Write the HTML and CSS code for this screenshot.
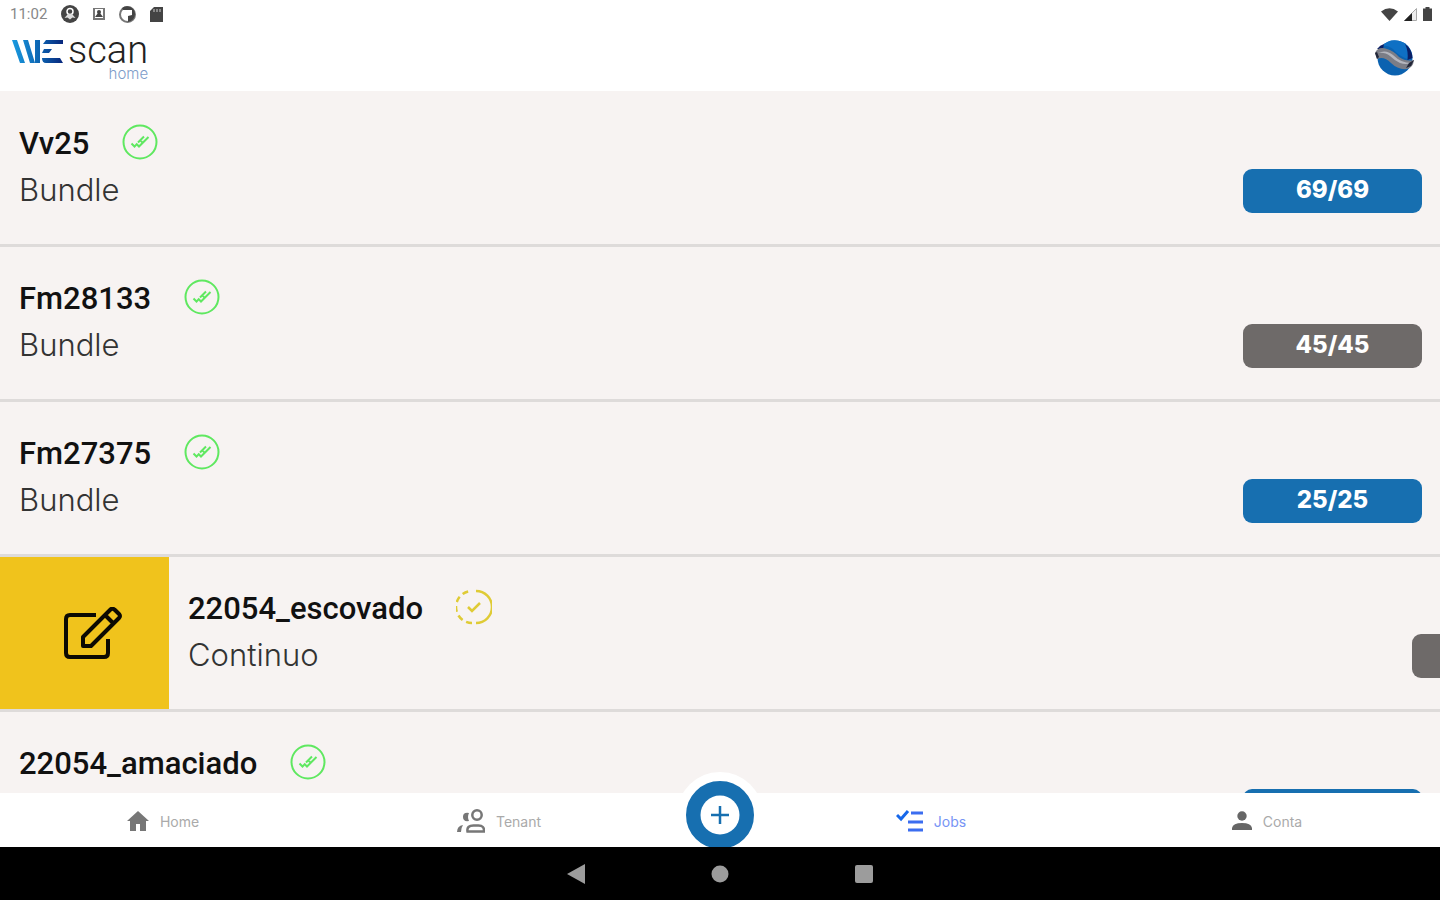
FILE: index.html
```html
<!DOCTYPE html>
<html lang="pt">
  <head>
    <meta charset="utf-8">
    <meta name="viewport" content="width=device-width, initial-scale=1">
    <title>WEscan home</title>
    <link rel="stylesheet" href="styles.css">
  </head>
  <body>
    <!-- shared status icons -->
    <svg class="defs" aria-hidden="true">
      <symbol id="done" viewBox="0 0 36 36">
        <circle cx="18" cy="18" r="16.5" fill="none" stroke="currentColor" stroke-width="2"/>
        <path d="M9.500 19.500l3 3 1.500-1.500M14 19.500l3 3 9.500-9.500M16 18.500l6-6M20 18l-2-2" fill="none" stroke="currentColor" stroke-width="2"/>
      </symbol>
      <symbol id="partial" viewBox="0 0 36 36">
        <path d="M20 2a16 16 0 0 1 0 32" fill="none" stroke="currentColor" stroke-width="2.500"/>
        <path d="M16 34A16 16 0 0 1 16 2" fill="none" stroke="currentColor" stroke-width="2.500" stroke-dasharray="6 4"/>
        <path d="M12 18l4 4 8-8" fill="none" stroke="currentColor" stroke-width="2.500"/>
      </symbol>
    </svg>

    <div class="status">
      <span class="clock">11:02</span>
      <svg width="18" height="18" viewBox="0 0 18 18"><circle cx="9" cy="9" r="9" fill="#444"/><circle cx="9" cy="6.500" r="3" fill="none" stroke="#fff" stroke-width="1.500"/><path d="M3.500 13l3.500-4h4l3.500 4-3-.5-2.500 2-2.500-2z" fill="#ddd"/></svg>
      <svg width="12" height="12" viewBox="0 0 12 12"><path d="M0 0h12v12H0z" fill="#777"/><path d="M2 1h8v9H2z" fill="#fff"/><circle cx="6" cy="4" r="2" fill="#444"/><path d="M2 9l3-4h2l3 4z" fill="#444"/></svg>
      <svg width="17" height="17" viewBox="0 0 17 17"><circle cx="8.500" cy="8.500" r="7.500" fill="#fff" stroke="#777" stroke-width="2"/><path d="M4 4h9v5l-4 1v6a8 8 0 0 0 7-8 8 8 0 0 0-13-6z" fill="#444"/></svg>
      <svg width="13" height="15" viewBox="0 0 13 15"><path d="M4 0h9v15H0V4z" fill="#444"/><path d="M4 2v3M7 2v3M10 2v3" stroke="#ccc"/></svg>
      <span class="signals">
        <svg width="17" height="13" viewBox="0 0 17 13"><path d="M0 3.500Q8.500-3 17 3.500L8.500 13z" fill="#444"/></svg>
        <svg width="13" height="13" viewBox="0 0 13 13"><path d="M12.500 .5v12H.5z" fill="#eee" stroke="#aaa"/><path d="M8 5v8H0z" fill="#222"/></svg>
        <svg width="9" height="14" viewBox="0 0 9 14"><path d="M2.500 0h4v1.500H9V14H0V1.500h2.500z" fill="#444"/></svg>
      </span>
    </div>

    <header class="header">
      <div class="logo">
        <svg class="mark" width="52" height="24" viewBox="0 0 52 24" aria-label="WE">
          <defs>
            <linearGradient id="mk" x1="0" x2="52" y1="0" y2="0" gradientUnits="userSpaceOnUse"><stop stop-color="#1a9be0"/><stop offset=".55" stop-color="#0c62b0"/><stop offset="1" stop-color="#08247a"/></linearGradient>
          </defs>
          <path d="M0 0h5l8 23H8zM11 0h5l7 23h-5zM23 0h5v23h-5zM34 0h17v4H31zM32 9h8l-3 4h-7zM30 18h18l3 5H34q-4 0-4-5z" fill="url(#mk)"/>
        </svg>
        <span class="word">scan</span>
        <span class="sub">home</span>
      </div>
      <svg class="globe" width="42" height="36" viewBox="0 0 42 36">
        <circle cx="21" cy="18" r="17.500" fill="#0b62b0"/>
        <path d="M8 6A17.500 17.500 0 0 1 38 14l-2 6Q24 16 19 9 14 5 8 6z" fill="#0f70c4"/>
        <path d="M31 4q7 5 7.500 14l-5 2q1-9-2.500-16zM3 9q3-4 7-5l-1 5z" fill="#0a1f66"/>
        <path d="M1 13Q4 6 13 9q7 2 12 8 7 5 15 3-1 8-7 9-9 1-16-6Q10 16 3 19z" fill="#7b7d86"/>
        <path d="M4 13q8-4 15 2 8 8 18 8-5 2-11 0-6-3-10-7-5-4-12-3z" fill="#b4b6be"/>
        <path d="M1 13l2 6 2-2-2-5zM40 20l-5 3-3 5 5-2z" fill="#222638"/>
      </svg>
    </header>

    <main class="list">
      <article class="row">
        <div class="job">
          <div class="info">
            <h2 class="name">Vv25 <svg class="state done"><use href="#done"/></svg></h2>
            <p class="kind">Bundle</p>
          </div>
          <span class="count blue">69/69</span>
        </div>
      </article>
      <article class="row">
        <div class="job">
          <div class="info">
            <h2 class="name">Fm28133 <svg class="state done"><use href="#done"/></svg></h2>
            <p class="kind">Bundle</p>
          </div>
          <span class="count grey">45/45</span>
        </div>
      </article>
      <article class="row">
        <div class="job">
          <div class="info">
            <h2 class="name">Fm27375 <svg class="state done"><use href="#done"/></svg></h2>
            <p class="kind">Bundle</p>
          </div>
          <span class="count blue">25/25</span>
        </div>
      </article>
      <!-- swiped open, edit action showing -->
      <article class="row">
        <button class="edit" type="button" aria-label="Editar">
          <svg width="58" height="52" viewBox="0 0 58 52" fill="none" stroke="#0c0a02" stroke-width="4" stroke-linejoin="round">
            <path d="M32 8H6q-4 0-4 4v34q0 4 4 4h34q4 0 4-4V32"/>
            <path d="M19 39v-9L47 2q2-1 4 1l4 4q2 2 0 4L27 39zM41 8l8 8"/>
          </svg>
        </button>
        <div class="job">
          <div class="info">
            <h2 class="name">22054_escovado <svg class="state partial"><use href="#partial"/></svg></h2>
            <p class="kind">Continuo</p>
          </div>
          <span class="count grey"></span>
        </div>
      </article>
      <article class="row">
        <div class="job">
          <div class="info">
            <h2 class="name">22054_amaciado <svg class="state done"><use href="#done"/></svg></h2>
          </div>
          <span class="count blue"></span>
        </div>
      </article>
    </main>

    <nav class="tabs">
      <a class="tab" href="#">
        <svg width="22" height="20" viewBox="0 0 22 20"><path d="M11 0l11 10h-3v10h-6v-7H9v7H3V10H0z" fill="#777"/></svg>
        Home
      </a>
      <a class="tab" href="#">
        <svg width="28" height="24" viewBox="0 0 28 24" fill="none" stroke="#777" stroke-width="2.500"><circle cx="20" cy="6" r="4.700"/><path d="M10.500 22.500q-1-6 6-6h5q6 0 5.500 6z"/><path d="M12 4q-6-1-6 4t6 4q-2-4 0-8zM6 16q-6 1-6 7h4q0-4 2-7z" fill="#777" stroke="none"/></svg>
        Tenant
      </a>
      <div class="middle">
        <button class="add" type="button" aria-label="Adicionar">
          <svg width="40" height="40" viewBox="0 0 40 40"><circle cx="20" cy="20" r="19.500" fill="#fff"/><path d="M20 11v18M11 20h18" stroke="#176fb0" stroke-width="2.500"/></svg>
        </button>
      </div>
      <a class="tab active" href="#">
        <svg width="27" height="24" viewBox="0 0 27 24" fill="none" stroke="#3b6df0" stroke-width="3"><path d="M1 6l4 4 7-8" stroke="#1768ea"/><path d="M15 4h12M12 13h15M12 21h15"/></svg>
        Jobs
      </a>
      <a class="tab" href="#">
        <svg width="20" height="20" viewBox="0 0 20 20" fill="#666"><circle cx="10" cy="5" r="4.700"/><path d="M0 19v-2q1-5 10-5t10 5v2z"/></svg>
        Conta
      </a>
    </nav>

    <footer class="system">
      <button type="button" aria-label="Back"><svg width="20" height="20" viewBox="0 0 20 20"><path d="M19 0v20L1 10z" fill="#9c9c9c"/></svg></button>
      <button type="button" aria-label="Home"><svg width="20" height="20" viewBox="0 0 20 20"><circle cx="10" cy="10" r="8.500" fill="#9c9c9c"/></svg></button>
      <button type="button" aria-label="Recent"><svg width="20" height="20" viewBox="0 0 20 20"><rect x="1" y="1" width="18" height="18" rx="2" fill="#9c9c9c"/></svg></button>
    </footer>
  </body>
</html>
```

FILE: styles.css
```css
* { box-sizing: border-box; }
body { margin: 0; height: 100vh; display: flex; flex-direction: column; overflow: hidden; background: #fff; color: #111; font-family: Inter, sans-serif; }
svg { display: block; flex: none; }
button { border: 0; padding: 0; background: none; cursor: pointer; }
.defs { position: absolute; width: 0; height: 0; }

.status { display: flex; align-items: center; gap: 14px; height: 28px; padding: 0 8px 0 10px; }
.clock { font: 15px Roboto, sans-serif; color: #888; }
.signals { display: flex; align-items: center; gap: 6px; margin-left: auto; }

.header { display: flex; justify-content: space-between; align-items: flex-start; height: 63px; padding: 12px 24px 0 12px; }
.logo { display: grid; grid-template-columns: 52px auto; grid-template-rows: 20px auto; column-gap: 4px; row-gap: 4px; }
.word { font: 300 38px/20px Roboto, sans-serif; color: #222; }
.sub { grid-column: 2; justify-self: end; font: 300 15px/20px Inter, sans-serif; color: #7d9cc9; }

.list { flex: 1; min-height: 0; overflow: hidden; padding-top: 1px; background: #f7f3f2; }
.row { display: flex; height: 155px; border-bottom: 3px solid #dedbda; overflow: hidden; }
.job { flex: 0 0 100%; display: flex; justify-content: space-between; padding: 32px 18px 0 19px; }
.name { display: flex; align-items: flex-start; gap: 33px; margin: 0; font: 500 31px/40px Roboto, sans-serif; }
.state { width: 36px; height: 36px; }
.done { color: #5fe860; }
.partial { color: #dfcb35; }
.kind { margin: 6px 0 0; font-size: 31px; line-height: 40px; font-weight: 300; color: #333; }
.count { width: 179px; height: 44px; margin-top: 45px; border-radius: 9px; font-size: 24px; line-height: 42px; font-weight: 800; text-align: center; color: #fff; }
.blue { background: #176fb0; }
.grey { background: #6e6a69; }
.edit { flex: none; display: flex; align-items: center; justify-content: center; width: 169px; padding-left: 17px; background: #f0c31c; }

.tabs { display: grid; grid-template-columns: 1fr 1fr 96px 1fr 1fr; height: 54px; background: #fff; }
.tab { display: flex; align-items: center; justify-content: center; gap: 11px; padding: 2px 10px 0 0; font-size: 14px; color: #aaa; text-decoration: none; }
.active { color: #7794f5; }
.middle { position: relative; }
.add { position: absolute; top: -21px; left: 5px; display: flex; align-items: center; justify-content: center; width: 86px; height: 86px; border: 9px solid #fff; border-radius: 50%; background: #176fb0; }

.system { position: relative; display: flex; justify-content: center; align-items: center; gap: 124px; height: 53px; background: #000; }
```
